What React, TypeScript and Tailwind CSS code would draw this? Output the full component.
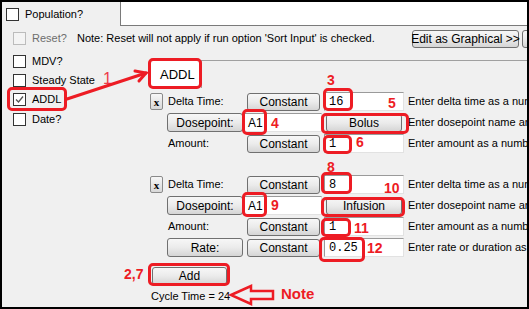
import React from "react";

type ChkProps = { label: string; checked?: boolean; disabled?: boolean };

const Check = ({ checked = false, disabled = false }: { checked?: boolean; disabled?: boolean }) => (
    <span
        className={`w-[13px] h-[13px] shrink-0 border flex items-center justify-center ${
            disabled ? "border-[#bcbcbc] bg-[#f4f4f4]" : "border-[#333333] bg-white"
        }`}
    >
        {checked && (
            <svg width="11" height="11" viewBox="0 0 11 11">
                <polyline points="2,5.5 4.5,8 9,2.5" fill="none" stroke="#555555" strokeWidth="1.3" />
            </svg>
        )}
    </span>
);

const CheckRow = ({ label, checked, disabled }: ChkProps) => (
    <div className="h-[19px] flex items-center gap-[6px]">
        <Check checked={checked} disabled={disabled} />
        <span className={`text-[11px] leading-none ${disabled ? "text-[#6d6d6d]" : "text-black"}`}>{label}</span>
    </div>
);

const Btn = ({ children, className = "" }: { children: React.ReactNode; className?: string }) => (
    <div
        className={`h-[18px] border border-[#707070] rounded-[3px] bg-linear-to-b from-[#f7f7f7] via-[#ebebeb] to-[#d5d5d5] text-[12px] leading-none text-black whitespace-nowrap flex items-center justify-center shrink-0 ${className}`}
    >
        {children}
    </div>
);

const Field = ({ value, mono = true, className = "" }: { value: string; mono?: boolean; className?: string }) => (
    <div
        className={`h-[19px] bg-white border border-[#9a9a9a] border-b-[#e2e2e2] border-r-[#e2e2e2] flex items-center shrink-0 ${
            mono ? "pl-[4px] font-['Liberation_Mono',monospace] text-[12px]" : "pl-[3px] text-[12px]"
        } ${className}`}
    >
        {value}
    </div>
);

const XBtn = () => (
    <div className="w-[13px] h-[17px] border border-[#8a8a8a] rounded-[2px] bg-linear-to-b from-[#f7f7f7] to-[#d8d8d8] flex items-center justify-center font-['Liberation_Serif',serif] font-bold text-[11px] leading-none pt-[2px]">
        x
    </div>
);

const Desc = ({ text }: { text: string }) => (
    <div className="pl-px overflow-hidden whitespace-nowrap text-[11px] leading-none">{text}</div>
);

const Row = ({ children }: { children: React.ReactNode }) => (
    <div className="grid grid-cols-[17px_77px_79px_84px_120px] h-[19px] items-center">{children}</div>
);

const Box = ({ l, t, w, h }: { l: number; t: number; w: number; h: number }) => (
    <div
        className="absolute border-[3px] border-[#ed1c24] rounded-[5px]"
        style={{ left: l, top: t, width: w, height: h }}
    />
);

const Num = ({ l, t, text, className = "" }: { l: number; t: number; text: string; className?: string }) => (
    <div
        className={`absolute text-[#ed1c24] font-bold text-[14px] leading-[14px] ${className}`}
        style={{ left: l, top: t }}
    >
        {text}
    </div>
);

export default function App() {
    return (
        <div className="relative w-[529px] h-[309px] overflow-hidden font-['Liberation_Sans',Arial,sans-serif] text-black">
            <div className="w-full h-full border-2 border-black bg-[#f0f0f0] flex flex-col">
                {/* header */}
                <div className="h-[24px] flex shrink-0">
                    <div className="w-[118px] pl-[4px] flex items-center">
                        <CheckRow label="Population?" />
                    </div>
                    <div className="flex-1 bg-white border-l border-b border-[#7a7a7a]" />
                </div>

                {/* reset row */}
                <div className="h-[25px] flex items-center pl-[11px] overflow-hidden shrink-0">
                    <Check disabled />
                    <span className="w-[51px] pl-[6px] text-[11px] text-[#6d6d6d] shrink-0">Reset?</span>
                    <span className="w-[335px] text-[11px] whitespace-nowrap shrink-0">
                        Note: Reset will not apply if run option 'Sort Input' is checked.
                    </span>
                    <Btn className="w-[107px] text-[11px]">Edit as Graphical &gt;&gt;</Btn>
                    <Btn className="w-[40px] ml-[3px]">&nbsp;</Btn>
                </div>

                {/* body */}
                <div className="flex flex-1">
                    <div className="w-[148px] pl-[11px] pt-px flex flex-col shrink-0">
                        <CheckRow label="MDV?" />
                        <CheckRow label="Steady State" />
                        <CheckRow label="ADDL" checked />
                        <div className="mt-px">
                            <CheckRow label="Date?" />
                        </div>
                    </div>

                    <div className="flex-1 flex flex-col">
                        <div className="mt-[9px] flex h-[28px]">
                            <div className="w-[52px] bg-white border border-b-0 border-[#a0a0a0] flex items-center pl-[9px] text-[13px]">
                                ADDL
                            </div>
                            <div className="flex-1 border-t border-[#a0a0a0]" />
                        </div>

                        <div className="mt-[4px] flex flex-col gap-[2px]">
                            <Row>
                                <XBtn />
                                <span className="pl-px text-[11px]">Delta Time:</span>
                                <Btn className="ml-[3px] w-[73px]">Constant</Btn>
                                <Field value="16" className="ml-px w-[80px]" />
                                <Desc text="Enter delta time as a number" />
                            </Row>
                            <Row>
                                <span />
                                <Btn className="w-[76px] h-[19px]">Dosepoint:</Btn>
                                <Field value="A1" mono={false} className="w-[78px]" />
                                <Btn className="ml-[3px] w-[76px]">Bolus</Btn>
                                <Desc text="Enter dosepoint name and type" />
                            </Row>
                            <Row>
                                <span />
                                <span className="pl-px text-[11px]">Amount:</span>
                                <Btn className="ml-[3px] w-[73px]">Constant</Btn>
                                <Field value="1" className="ml-px w-[80px]" />
                                <Desc text="Enter amount as a number" />
                            </Row>
                        </div>

                        <div className="mt-[22px] flex flex-col gap-[2px]">
                            <Row>
                                <XBtn />
                                <span className="pl-px text-[11px]">Delta Time:</span>
                                <Btn className="ml-[3px] w-[73px]">Constant</Btn>
                                <Field value="8" className="ml-px w-[80px]" />
                                <Desc text="Enter delta time as a number" />
                            </Row>
                            <Row>
                                <span />
                                <Btn className="w-[76px] h-[19px]">Dosepoint:</Btn>
                                <Field value="A1" mono={false} className="w-[78px]" />
                                <Btn className="ml-[3px] w-[76px]">Infusion</Btn>
                                <Desc text="Enter dosepoint name and type" />
                            </Row>
                            <Row>
                                <span />
                                <span className="pl-px text-[11px]">Amount:</span>
                                <Btn className="ml-[3px] w-[73px]">Constant</Btn>
                                <Field value="1" className="ml-px w-[80px]" />
                                <Desc text="Enter amount as a number" />
                            </Row>
                            <Row>
                                <span />
                                <Btn className="w-[76px] h-[19px]">Rate:</Btn>
                                <Btn className="ml-[3px] w-[73px]">Constant</Btn>
                                <Field value="0.25" className="ml-px w-[80px]" />
                                <Desc text="Enter rate or duration as a number" />
                            </Row>
                        </div>

                        <Btn className="mt-[10px] ml-[2px] w-[75px] h-[17px]">Add</Btn>
                        <div className="mt-[5px] ml-px text-[11px] leading-[13px]">Cycle Time = 24</div>
                    </div>
                </div>
            </div>

            {/* annotations */}
            <div className="absolute top-0 left-0 w-full h-full pointer-events-none">
                <Box l={7} t={87} w={60} h={24} />
                <Box l={148} t={58} w={54} h={31} />
                <Box l={323} t={88} w={30} h={23} />
                <Box l={242} t={109} w={25} h={26} />
                <Box l={321} t={113} w={88} h={21} />
                <Box l={323} t={135} w={29} h={19} />
                <Box l={321} t={172} w={31} h={22} />
                <Box l={242} t={192} w={25} h={25} />
                <Box l={321} t={197} w={84} h={20} />
                <Box l={321} t={218} w={30} h={19} />
                <Box l={319} t={237} w={46} h={25} />
                <Box l={148} t={263} w={82} h={23} />

                <div className="absolute left-[103px] top-[71px] text-[#ee3a4a] text-[16px] leading-[16px]">1</div>
                <Num l={327} t={73} text="3" />
                <Num l={388} t={96} text="5" />
                <Num l={271} t={116} text="4" />
                <Num l={356} t={135} text="6" />
                <Num l={327} t={160} text="8" />
                <Num l={384} t={181} text="10" />
                <Num l={271} t={198} text="9" />
                <Num l={354} t={221} text="11" />
                <Num l={367} t={241} text="12" />
                <Num l={124} t={267} text="2,7" />
                <Num l={281} t={286} text="Note" className="text-[15px] leading-[15px]" />

                <svg className="absolute top-0 left-0" width="529" height="309">
                    <g stroke="#ed1c24" strokeWidth="3" fill="none" strokeLinecap="round">
                        <line x1="67" y1="99" x2="146" y2="73" />
                        <polyline points="135,71 146,73 139,81" />
                    </g>
                    <polygon
                        points="231,295 251,286 251,291 273,291 273,299 251,299 251,304"
                        stroke="#ed1c24"
                        strokeWidth="2.5"
                        fill="none"
                        strokeLinejoin="miter"
                    />
                </svg>
            </div>
        </div>
    );
}
